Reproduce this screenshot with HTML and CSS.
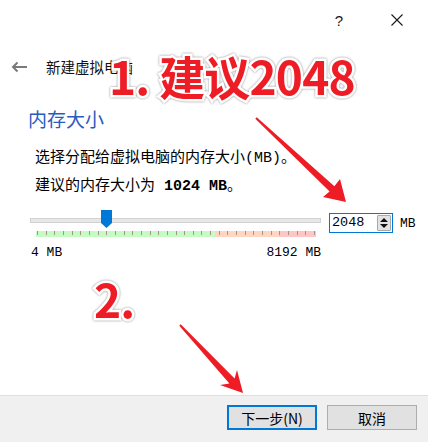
FILE: index.html
```html
<!DOCTYPE html>
<html lang="zh-CN">
<head>
<meta charset="utf-8">
<title>新建虚拟电脑</title>
<link rel="stylesheet" href="styles.css">
</head>
<body>
<div class="window">
  <div class="titlebar">
    <span class="cap-btn help">?</span>
    <span class="cap-btn close">
      <svg width="12" height="12" viewBox="0 0 12 12"><path d="M0.5 0.5 L11.5 11.5 M11.5 0.5 L0.5 11.5" stroke="#1a1a1a" stroke-width="1.1" fill="none"/></svg>
    </span>
  </div>
  <div class="nav">
    <svg class="back" width="16" height="12" viewBox="0 0 16 12"><path d="M16 6 H2 M6.5 1.5 L2 6 L6.5 10.5" stroke="#7a7a7a" stroke-width="2" fill="none"/></svg>
    <span class="nav-title">新建虚拟电脑</span>
  </div>
  <main class="content">
    <h1 class="heading">内存大小</h1>
    <p class="desc">选择分配给虚拟电脑的内存大小(MB)。</p>
    <p class="desc">建议的内存大小为 <b class="mono-b">1024 MB</b>。</p>
    <div class="slider-row">
      <div class="slider">
        <div class="track"></div>
        <svg class="thumb" width="11" height="18" viewBox="0 0 11 18"><polygon points="0,0 11,0 11,13 5.5,18 0,13" fill="#0078d7"/></svg>
        <div class="band">
          <div class="seg seg-green"></div>
          <div class="seg seg-peach"></div>
          <div class="seg seg-pink"></div>
          <div class="ticks">
            <i></i><i></i><i></i><i></i><i></i><i></i><i></i><i></i><i></i><i></i><i></i>
            <i></i><i></i><i></i><i></i><i></i><i></i><i></i><i></i><i></i><i></i><i></i>
            <i></i><i></i><i></i><i></i><i></i><i></i><i></i><i></i><i></i><i></i><i></i>
          </div>
        </div>
        <div class="labels"><span>4 MB</span><span>8192 MB</span></div>
      </div>
      <div class="spinbox">
        <span class="spin-value">2048</span>
        <div class="spin-btns">
          <span class="spin-up"></span>
          <span class="spin-down"></span>
        </div>
      </div>
      <span class="unit">MB</span>
    </div>
  </main>
  <footer class="footer">
    <button class="btn btn-default">下一步(N)</button>
    <button class="btn">取消</button>
  </footer>

  <div class="anno anno-1">1. 建议2048</div>
  <div class="anno anno-2">2.</div>
  <svg class="arrows" width="428" height="442" viewBox="0 0 428 442">
    <polygon fill="#ee1c24" points="255.3,118.7 329.6,191.5 323,197 346,202 340,179 334.4,186.3 256.7,117.3"/>
    <polygon fill="#ee1c24" points="179.3,325.7 229.4,383.4 220,385 243,393 237,370 234.6,378.6 180.7,324.3"/>
  </svg>
</div>
</body>
</html>
```

FILE: styles.css
```css
* { box-sizing: border-box; }
body {
  margin: 0;
  background: #fff;
  font-family: "Noto Sans CJK SC", sans-serif;
  color: #000;
}
.window {
  position: relative;
  width: 428px;
  height: 442px;
  display: flex;
  flex-direction: column;
  overflow: hidden;
  background: #fff;
}
.titlebar {
  height: 40px;
  display: flex;
  justify-content: flex-end;
  align-items: center;
  gap: 12px;
  padding-right: 8px;
}
.cap-btn {
  width: 46px;
  height: 40px;
  display: flex;
  align-items: center;
  justify-content: center;
}
.help {
  font-family: "Liberation Sans", sans-serif;
  font-size: 15px;
  color: #1a1a1a;
}
.nav {
  height: 54px;
  display: flex;
  align-items: center;
  padding-left: 11px;
  gap: 19px;
}
.back { display: block; }
.nav-title {
  font-size: 14.5px;
  line-height: 20px;
  color: #111;
}
.content {
  padding-left: 28px;
}
.heading {
  margin: 13px 0 0 0;
  font-size: 19px;
  line-height: 24px;
  font-weight: 400;
  color: #2a5cc0;
}
.desc {
  margin: 0 0 0 7px;
  font-family: "Liberation Mono", "Noto Sans CJK SC", monospace;
  font-size: 15px;
  line-height: 28px;
}
.heading + .desc { margin-top: 14px; }
.mono-b {
  font-family: "Liberation Mono", monospace;
  font-weight: 700;
}
.slider-row {
  display: flex;
  align-items: flex-start;
  margin-top: 9px;
  margin-left: 2px;
}
.slider {
  position: relative;
  width: 291px;
  padding-top: 8px;
}
.track {
  height: 5px;
  background: #e7e7e7;
  border: 1px solid #d2d2d2;
}
.thumb {
  position: absolute;
  left: 71px;
  top: 0;
}
.band {
  position: relative;
  display: flex;
  margin: 8px 0 0 6px;
  width: 280px;
  height: 6px;
}
.seg { height: 6px; }
.seg-green { width: 179px; background: #c6fcc4; }
.seg-peach { width: 64px; background: #ffd6c1; }
.seg-pink { width: 37px; background: #ffc6c6; }
.ticks {
  position: absolute;
  left: 0;
  top: 0;
  width: 280px;
  height: 4px;
  padding: 0 1px;
  display: flex;
  justify-content: space-between;
}
.ticks i {
  display: block;
  width: 1px;
  height: 4px;
  background: #a39589;
}
.labels {
  display: flex;
  justify-content: space-between;
  padding-left: 1px;
  margin-top: 9px;
  font-family: "Liberation Mono", monospace;
  font-size: 13px;
  line-height: 13px;
}
.spinbox {
  margin: 3px 0 0 8px;
  width: 64px;
  height: 20px;
  border: 1px solid #0078d7;
  display: flex;
  align-items: center;
  justify-content: space-between;
  padding: 0 1px 0 2px;
}
.spin-value {
  font-family: "Liberation Mono", monospace;
  font-size: 13.5px;
  line-height: 18px;
}
.spin-btns {
  width: 14px;
  height: 16px;
  background: #e3e3e3;
  border: 1px solid #a9a9a9;
  border-radius: 1px;
  display: flex;
  flex-direction: column;
  align-items: center;
  justify-content: space-around;
  padding: 1px 0;
}
.spin-up, .spin-down {
  width: 0;
  height: 0;
  border-left: 4px solid transparent;
  border-right: 4px solid transparent;
}
.spin-up { border-bottom: 4px solid #111; }
.spin-down { border-top: 4px solid #111; }
.unit {
  margin: 4px 0 0 7px;
  font-family: "Liberation Mono", monospace;
  font-size: 13px;
  line-height: 20px;
}
.footer {
  margin-top: auto;
  height: 47px;
  background: #f0f0f0;
  border-top: 1px solid #dfdfdf;
  display: flex;
  justify-content: flex-end;
  align-items: flex-start;
  gap: 10px;
  padding: 9px 11px 0 0;
}
.btn {
  width: 90px;
  height: 25px;
  margin: 0;
  background: #e1e1e1;
  border: 1px solid #adadad;
  font-family: "Noto Sans CJK SC", sans-serif;
  font-size: 14px;
  line-height: 20px;
  color: #000;
  padding: 0;
}
.btn-default {
  border: 2px solid #0078d7;
}
.anno {
  position: absolute;
  font-family: "Noto Sans CJK SC", sans-serif;
  font-weight: 700;
  font-size: 46px;
  line-height: 1;
  letter-spacing: -0.8px;
  color: #ee1c25;
  -webkit-text-stroke: 5px #fff;
  paint-order: stroke fill;
  filter: drop-shadow(0 0 1px rgba(0,0,0,0.45));
  white-space: nowrap;
}
.anno-1 { left: 109px; top: 52px; }
.anno-2 { left: 94px; top: 275px; }
.arrows {
  position: absolute;
  left: 0;
  top: 0;
  pointer-events: none;
}
```
